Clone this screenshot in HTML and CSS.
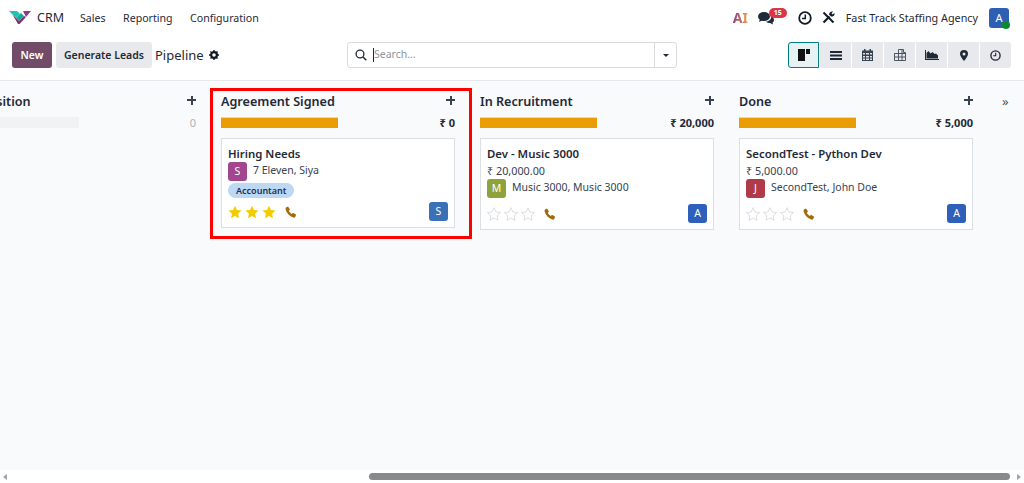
FILE: index.html
```html
<!DOCTYPE html>
<html lang="en">
<head>
    <meta charset="UTF-8">
    <meta name="viewport" content="width=device-width, initial-scale=1.0">
    <title>CRM</title>
    <link rel="stylesheet" href="styles.css">
</head>
<body>
    <!-- Top menu -->
    <header class="navbar">
        <svg class="logo" width="22" height="13" viewBox="0 0 22 13">
            <path d="M0 0h8l3 3-4 4z" fill="#1fc4b0"/>
            <path d="M7 7l5-5 3 3-5 5z" fill="#17a99a"/>
            <path d="M14 0h8l-5 6z" fill="#8a3a86"/>
            <path d="M3.500 3.500L10 10l5-5 2 1-6.500 7H9z" fill="#7c2f72"/>
        </svg>
        <span class="app-name">CRM</span>
        <nav class="menu">
            <a>Sales</a>
            <a>Reporting</a>
            <a>Configuration</a>
        </nav>
        <div class="systray">
            <span class="ai-mark">AI</span>
            <span class="chat">
                <svg width="16" height="14" viewBox="0 0 16 14">
                    <ellipse cx="6" cy="5.500" rx="6" ry="4.500" fill="#1f2937"/>
                    <path d="M2 8l-1 3 4-2z" fill="#1f2937"/>
                    <path d="M13 5c2 1 3 2.500 3 4 0 1-.5 2-1.500 2.500l.5 2-3-1.500c-1.500 0-3-.5-4-1.500 3 0 6-2.500 5-5.500z" fill="#1f2937"/>
                </svg>
                <span class="badge">15</span>
            </span>
            <svg class="clock" width="14" height="14" viewBox="0 0 14 14">
                <circle cx="7" cy="7" r="5.800" fill="none" stroke="#111827" stroke-width="1.800"/>
                <path d="M7.300 3.500v4H4" fill="none" stroke="#111827" stroke-width="1.500"/>
            </svg>
            <svg class="tools" width="13" height="13" viewBox="0 0 13 13">
                <path d="M1.500 1.500l10 10" stroke="#111827" stroke-width="2" fill="none"/>
                <path d="M1.500 11.500l6-6" stroke="#111827" stroke-width="2.200"/>
                <path d="M7 3.500C7 1.500 9 0 11 .5L9.500 2.500l1 1 2-1.500c.5 2-1 4-3.500 3.500z" fill="#111827"/>
            </svg>
            <span class="company">Fast Track Staffing Agency</span>
            <span class="user-avatar">A<i class="online"></i></span>
        </div>
    </header>

    <!-- Control panel -->
    <section class="control-panel">
        <div class="cp-left">
            <button class="btn btn-primary">New</button>
            <button class="btn btn-secondary">Generate Leads</button>
            <span class="breadcrumb">Pipeline</span>
            <svg class="gear" width="10" height="10" viewBox="0 0 10 10">
                <circle cx="5" cy="5" r="2.900" fill="none" stroke="#111827" stroke-width="2.200"/>
                <path d="M5 0v10M0 5h10M1.500 1.500l7 7M8.500 1.500l-7 7" stroke="#111827" stroke-width="1.400" stroke-dasharray="1.600 6.800"/>
            </svg>
        </div>
        <div class="search">
            <svg class="search-icon" width="12" height="12" viewBox="0 0 12 12">
                <circle cx="5" cy="5" r="3.900" fill="none" stroke="#1f2937" stroke-width="1.300"/>
                <path d="M8 8l3.300 3.300" stroke="#1f2937" stroke-width="1.500"/>
            </svg>
            <span class="caret"></span>
            <span class="placeholder">Search...</span>
            <span class="search-drop"><i class="arrow-down"></i></span>
        </div>
        <div class="view-switch">
            <button class="view active">
                <svg width="12" height="12" viewBox="0 0 12 12"><path d="M0 0h7v12H0zM8 0h4v5H8z" fill="#111"/></svg>
            </button>
            <button class="view">
                <svg width="12" height="9" viewBox="0 0 12 9"><path d="M0 0h12v2H0zM0 3.500h12v2H0zM0 7h12v2H0z" fill="#1f2937"/></svg>
            </button>
            <button class="view">
                <svg width="11" height="12" viewBox="0 0 11 12"><path d="M0 1.500h11V12H0z" fill="#374151"/><path d="M2 0h1.500v2H2zM7.500 0H9v2H7.500z" fill="#374151"/><path d="M1 4h2v1.500H1zM4 4h3v1.500H4zM8 4h2v1.500H8zM1 7h2v1.500H1zM4 7h3v1.500H4zM8 7h2v1.500H8zM1 9.500h2V11H1zM4 9.500h3V11H4zM8 9.500h2V11H8z" fill="#dfe2e8"/></svg>
            </button>
            <button class="view">
                <svg width="12" height="12" viewBox="0 0 12 12"><path d="M4.500.5h5v3h2v8H.5v-7h4zM.5 4.500h11M.5 8h11M4.500 4v7.500M8 1v10.500" fill="none" stroke="#4b5563"/></svg>
            </button>
            <button class="view">
                <svg width="14" height="10" viewBox="0 0 14 10"><path d="M0 0h1v9h13v1H0z" fill="#1f2937"/><path d="M1.500 8.500V3l2-2 2 2.500 2-1.500 2 2 1.500-.5 2 2v3z" fill="#1f2937"/></svg>
            </button>
            <button class="view">
                <svg width="8" height="11" viewBox="0 0 8 11"><path d="M4 0a4 4 0 0 1 4 4c0 2-2 4.500-4 7-2-2.500-4-5-4-7a4 4 0 0 1 4-4z" fill="#1f2937"/><circle cx="4" cy="4" r="1.500" fill="#e7e9ed"/></svg>
            </button>
            <button class="view">
                <svg width="11" height="11" viewBox="0 0 12 12"><circle cx="6" cy="6" r="5" fill="none" stroke="#1f2937" stroke-width="1.500"/><path d="M6.200 3v3.300H3.500" fill="none" stroke="#1f2937" stroke-width="1.200"/></svg>
            </button>
        </div>
    </section>

    <!-- Kanban -->
    <main class="kanban">
        <div class="board">
            <section class="column">
                <div class="col-head"><h3>Acquisition</h3><span class="plus"></span></div>
                <div class="col-progress"><div class="bar bar-empty"></div><span class="sum sum-empty">0</span></div>
            </section>

            <section class="column">
                <div class="highlight"></div>
                <div class="col-head"><h3>Agreement Signed</h3><span class="plus"></span></div>
                <div class="col-progress"><div class="bar"></div><span class="sum">₹ 0</span></div>
                <article class="card card-tag">
                    <h4>Hiring Needs</h4>
                    <div class="partner"><span class="avatar purple">S</span><span class="partner-name">7 Eleven, Siya</span></div>
                    <span class="tag">Accountant</span>
                    <div class="card-foot">
                        <span class="stars">
                            <svg class="star" viewBox="0 0 16 16"><path class="on" d="M8 .8l2.200 4.900 5.300.6-4 3.600 1.100 5.300L8 12.500l-4.600 2.700 1.100-5.300-4-3.600 5.300-.6z"/></svg>
                            <svg class="star" viewBox="0 0 16 16"><path class="on" d="M8 .8l2.200 4.900 5.300.6-4 3.600 1.100 5.300L8 12.500l-4.600 2.700 1.100-5.300-4-3.600 5.300-.6z"/></svg>
                            <svg class="star" viewBox="0 0 16 16"><path class="on" d="M8 .8l2.200 4.900 5.300.6-4 3.600 1.100 5.300L8 12.500l-4.600 2.700 1.100-5.300-4-3.600 5.300-.6z"/></svg>
                        </span>
                        <svg class="phone" viewBox="0 0 12 12"><path d="M1 1.500L3 .5l2 3-1.200 1.200c.6 1.400 1.600 2.500 3 3.200L8 6.800l3.200 2-1 2.200c-.4.600-1.200.8-2 .5C4.500 10.300 1.800 7.500.6 3.300.4 2.600.6 1.900 1 1.500z"/></svg>
                        <span class="avatar owner steel">S</span>
                    </div>
                </article>
            </section>

            <section class="column">
                <div class="col-head"><h3>In Recruitment</h3><span class="plus"></span></div>
                <div class="col-progress"><div class="bar"></div><span class="sum">₹ 20,000</span></div>
                <article class="card">
                    <h4>Dev - Music 3000</h4>
                    <div class="amount">₹ 20,000.00</div>
                    <div class="partner"><span class="avatar olive">M</span><span class="partner-name">Music 3000, Music 3000</span></div>
                    <div class="card-foot">
                        <span class="stars">
                            <svg class="star" viewBox="0 0 16 16"><path class="off" d="M8 .8l2.200 4.900 5.300.6-4 3.600 1.100 5.300L8 12.500l-4.600 2.700 1.100-5.300-4-3.600 5.300-.6z"/></svg>
                            <svg class="star" viewBox="0 0 16 16"><path class="off" d="M8 .8l2.200 4.900 5.300.6-4 3.600 1.100 5.300L8 12.500l-4.600 2.700 1.100-5.300-4-3.600 5.300-.6z"/></svg>
                            <svg class="star" viewBox="0 0 16 16"><path class="off" d="M8 .8l2.200 4.900 5.300.6-4 3.600 1.100 5.300L8 12.500l-4.600 2.700 1.100-5.300-4-3.600 5.300-.6z"/></svg>
                        </span>
                        <svg class="phone" viewBox="0 0 12 12"><path d="M1 1.500L3 .5l2 3-1.200 1.200c.6 1.400 1.600 2.500 3 3.200L8 6.800l3.200 2-1 2.200c-.4.600-1.200.8-2 .5C4.500 10.300 1.800 7.500.6 3.300.4 2.600.6 1.900 1 1.500z"/></svg>
                        <span class="avatar owner blue">A</span>
                    </div>
                </article>
            </section>

            <section class="column">
                <div class="col-head"><h3>Done</h3><span class="plus"></span></div>
                <div class="col-progress"><div class="bar"></div><span class="sum">₹ 5,000</span></div>
                <article class="card">
                    <h4>SecondTest - Python Dev</h4>
                    <div class="amount">₹ 5,000.00</div>
                    <div class="partner"><span class="avatar red">J</span><span class="partner-name">SecondTest, John Doe</span></div>
                    <div class="card-foot">
                        <span class="stars">
                            <svg class="star" viewBox="0 0 16 16"><path class="off" d="M8 .8l2.200 4.900 5.300.6-4 3.600 1.100 5.300L8 12.500l-4.600 2.700 1.100-5.300-4-3.600 5.300-.6z"/></svg>
                            <svg class="star" viewBox="0 0 16 16"><path class="off" d="M8 .8l2.200 4.900 5.300.6-4 3.600 1.100 5.300L8 12.500l-4.600 2.700 1.100-5.300-4-3.600 5.300-.6z"/></svg>
                            <svg class="star" viewBox="0 0 16 16"><path class="off" d="M8 .8l2.200 4.900 5.300.6-4 3.600 1.100 5.300L8 12.500l-4.600 2.700 1.100-5.300-4-3.600 5.300-.6z"/></svg>
                        </span>
                        <svg class="phone" viewBox="0 0 12 12"><path d="M1 1.500L3 .5l2 3-1.200 1.200c.6 1.400 1.600 2.500 3 3.200L8 6.800l3.200 2-1 2.200c-.4.600-1.200.8-2 .5C4.500 10.300 1.800 7.500.6 3.300.4 2.600.6 1.900 1 1.500z"/></svg>
                        <span class="avatar owner blue">A</span>
                    </div>
                </article>
            </section>

            <span class="more">»</span>
        </div>
    </main>

    <!-- Horizontal scrollbar of the board -->
    <div class="scrollbar">
        <i class="scroll-arrow left"></i>
        <div class="scroll-track"><div class="scroll-thumb"></div></div>
        <i class="scroll-arrow right"></i>
    </div>
</body>
</html>
```

FILE: styles.css
```css
* {
    box-sizing: border-box;
}

html, body {
    height: 100%;
}

body {
    margin: 0;
    display: flex;
    flex-direction: column;
    overflow: hidden;
    background: #fff;
    color: #1f2937;
    font-family: 'Noto Sans', 'Open Sans', sans-serif;
    font-size: 11px;
}

/* Top menu */
.navbar {
    display: flex;
    align-items: center;
    height: 35px;
    padding: 0 15px 0 9px;
}

.logo {
    margin-right: 6px;
}

.app-name {
    font-size: 12.500px;
    color: #1f2937;
    margin-right: 16px;
}

.menu {
    display: flex;
    gap: 17.500px;
    font-size: 10.600px;
    color: #1f2937;
}

.systray {
    margin-left: auto;
    display: flex;
    align-items: center;
}

.ai-mark {
    width: 15px;
    margin-right: 10px;
    font-size: 14px;
    font-weight: 700;
    line-height: 1;
    text-align: right;
    background: linear-gradient(90deg, #8a3f86, #c0695f 55%, #f3a94a);
    -webkit-background-clip: text;
    background-clip: text;
    color: transparent;
}

.chat {
    position: relative;
    display: flex;
    width: 16px;
    margin-right: 24px;
}

.badge {
    position: absolute;
    left: 11px;
    top: -3px;
    width: 18px;
    height: 10px;
    border-radius: 6px;
    background: #dc3545;
    color: #fff;
    font-size: 7px;
    font-weight: 700;
    line-height: 10px;
    text-align: center;
}

.clock {
    margin-right: 10px;
}

.tools {
    margin-right: 11px;
}

.company {
    font-size: 10.800px;
    margin-right: 11px;
}

.user-avatar {
    position: relative;
    width: 20px;
    height: 20px;
    border-radius: 3px;
    background: #2f5fb3;
    color: #fff;
    font-size: 11px;
    line-height: 20px;
    text-align: center;
}

.online {
    position: absolute;
    right: -1px;
    bottom: -1px;
    width: 8px;
    height: 8px;
    border-radius: 50%;
    background: #0a8a2a;
}

/* Control panel */
.control-panel {
    position: relative;
    display: flex;
    align-items: center;
    height: 46px;
    padding: 0 13px 5px 12px;
    border-bottom: 1px solid #e5e7eb;
}

.cp-left {
    display: flex;
    align-items: center;
    width: 335px;
}

.btn {
    height: 26px;
    padding: 0;
    border: none;
    border-radius: 3px;
    font-family: inherit;
    font-size: 10.500px;
    font-weight: 600;
}

.btn-primary {
    width: 40px;
    margin-right: 4px;
    background: #714b67;
    color: #fff;
}

.btn-secondary {
    width: 96px;
    margin-right: 3px;
    background: #e7e9ed;
    color: #1f2937;
}

.breadcrumb {
    font-size: 13px;
    margin-right: 5px;
}

.search {
    display: flex;
    align-items: center;
    width: 330px;
    height: 26px;
    border: 1px solid #d8dadd;
    border-radius: 3px;
    padding-left: 7px;
}

.search-icon {
    margin-right: 6px;
}

.caret {
    width: 1px;
    height: 14px;
    background: #1f2937;
}

.placeholder {
    color: #8f959e;
    font-size: 10.500px;
    margin-top: -2px;
}

.search-drop {
    margin-left: auto;
    width: 22px;
    height: 100%;
    border-left: 1px solid #d8dadd;
    display: flex;
    align-items: center;
    justify-content: center;
}

.arrow-down {
    border-top: 3px solid #1f2937;
    border-left: 3px solid transparent;
    border-right: 3px solid transparent;
}

.view-switch {
    margin-left: auto;
    display: flex;
    gap: 1px;
}

.view {
    display: flex;
    align-items: center;
    justify-content: center;
    width: 31px;
    height: 26px;
    padding: 0;
    border: none;
    background: #e7e9ed;
}

.view:first-child {
    border-radius: 3px 0 0 3px;
}

.view:last-child {
    border-radius: 0 3px 3px 0;
}

.view.active {
    background: #e6f2f3;
    border: 1px solid #017e84;
    border-radius: 3px 0 0 3px;
}

/* Kanban */
.kanban {
    flex: 1;
    background: #f9fafb;
    overflow: hidden;
}

.board {
    display: flex;
    gap: 25px;
    margin-left: -38px;
    padding-top: 10px;
}

.column {
    position: relative;
    flex: 0 0 234px;
}

/* Red marker around the second column */
.highlight {
    position: absolute;
    top: -3px;
    left: -11px;
    right: -17px;
    height: 151px;
    border: 3px solid #f00;
    pointer-events: none;
}

.col-head {
    display: flex;
    align-items: center;
    justify-content: space-between;
    height: 20px;
}

.col-head h3 {
    margin: 0;
    font-size: 12.600px;
    font-weight: 600;
    color: #1f2937;
    white-space: nowrap;
}

.plus {
    position: relative;
    width: 9px;
    height: 9px;
    margin-bottom: 2px;
    background:
        linear-gradient(#374151, #374151) center / 100% 2px no-repeat,
        linear-gradient(#374151, #374151) center / 2px 100% no-repeat;
}

.col-progress {
    display: flex;
    align-items: center;
    justify-content: space-between;
    height: 11px;
    margin: 6px 0 10px;
}

.bar {
    width: 117px;
    height: 11px;
    background: #ea9d03;
    border-top: 1px solid #f7d794;
}

.bar-empty {
    background: #f1f2f4;
    border: none;
}

.sum {
    font-size: 11px;
    font-weight: 700;
    color: #1f2937;
}

.sum-empty {
    font-weight: 400;
    color: #adb1b8;
}

.card {
    position: relative;
    height: 92px;
    padding: 6px 6px 0;
    background: #fff;
    border: 1px solid #dcdfe3;
}

.card-tag {
    height: 90px;
}

.card h4 {
    margin: 0;
    height: 17px;
    font-size: 11.400px;
    line-height: 17px;
    font-weight: 600;
    color: #1f2937;
}

.amount {
    height: 17px;
    line-height: 17px;
    font-size: 10.800px;
    color: #374151;
}

.partner {
    display: flex;
    align-items: flex-start;
    gap: 6px;
    font-size: 10.500px;
    color: #374151;
}

.partner-name {
    line-height: 17px;
}

.avatar {
    flex: none;
    width: 19px;
    height: 19px;
    border-radius: 3px;
    color: #fff;
    font-size: 10.500px;
    line-height: 19px;
    text-align: center;
}

.purple { background: #a2478f; }
.olive { background: #8ea33c; }
.red { background: #b03a48; }
.steel { background: #3a70b5; }
.blue { background: #2e5fbb; }

.tag {
    position: absolute;
    left: 6px;
    top: 44px;
    height: 15px;
    padding: 0 8px;
    border-radius: 8px;
    background: #bcd8f5;
    color: #1f2e4d;
    font-size: 9px;
    font-weight: 600;
    line-height: 15px;
}

.card-foot {
    position: absolute;
    left: 6px;
    right: 6px;
    bottom: 6px;
    display: flex;
    align-items: center;
}

.stars {
    display: flex;
    gap: 3px;
    margin-right: 9px;
}

.star {
    width: 14px;
    height: 14px;
}

.star .on {
    fill: #f3cc00;
}

.star .off {
    fill: #fff;
    stroke: #d6d8dc;
    stroke-width: 1;
}

.phone {
    width: 12px;
    height: 12px;
    fill: #a46a0a;
}

.owner {
    margin-left: auto;
}

.more {
    flex: none;
    margin: 0 0 0 4px;
    font-size: 13px;
    color: #4b5563;
    line-height: 20px;
}

/* Scrollbar */
.scrollbar {
    display: flex;
    align-items: center;
    height: 13px;
    background: #fff;
    padding: 0 3px;
}

.scroll-track {
    flex: 1;
    padding: 0 7px 0 362px;
}

.scroll-thumb {
    height: 7px;
    border-radius: 4px;
    background: #8a8a8a;
}

.scroll-arrow {
    width: 0;
    height: 0;
    border-top: 3px solid transparent;
    border-bottom: 3px solid transparent;
}

.scroll-arrow.left {
    border-right: 4px solid #a3a3a3;
}

.scroll-arrow.right {
    border-left: 4px solid #a3a3a3;
}
```
